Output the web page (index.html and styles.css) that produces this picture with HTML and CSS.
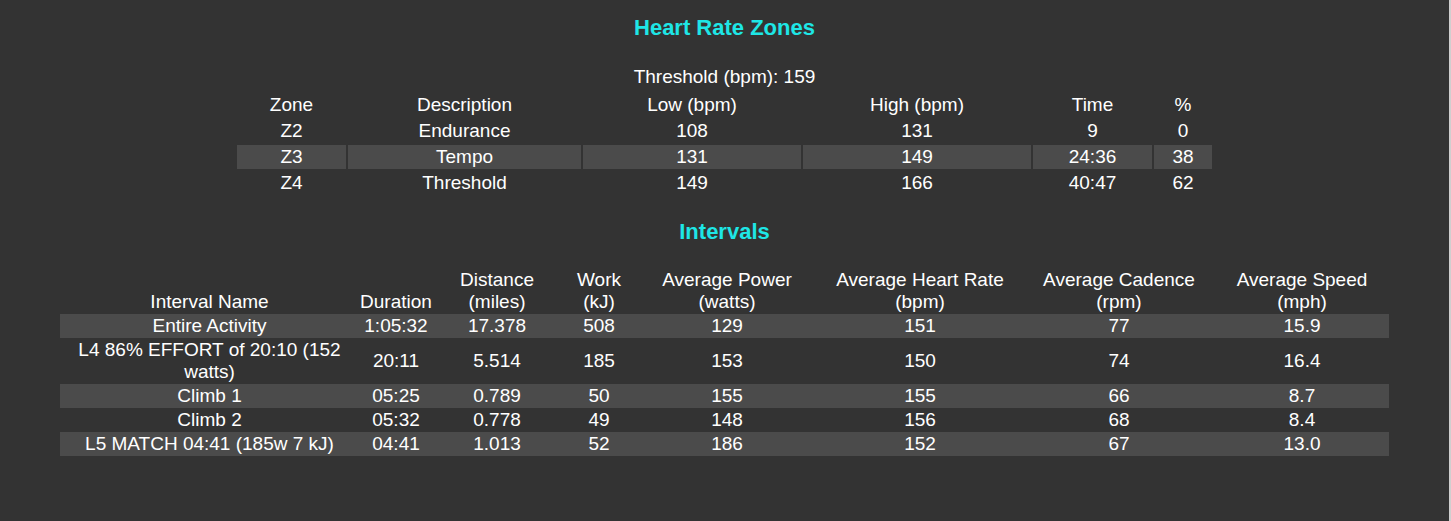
FILE: index.html
```html
<!DOCTYPE html>
<html lang="en">
<head>
<meta charset="utf-8">
<title>Activity Summary</title>
<link rel="stylesheet" href="styles.css">
</head>
<body>
<main class="page">
  <h3 class="title">Heart Rate Zones</h3>
  <div class="threshold">Threshold (bpm): 159</div>
  <table class="zones">
    <thead>
      <tr>
        <th class="z-zone">Zone</th>
        <th class="z-desc">Description</th>
        <th class="z-low">Low (bpm)</th>
        <th class="z-high">High (bpm)</th>
        <th class="z-time">Time</th>
        <th class="z-pct">%</th>
      </tr>
    </thead>
    <tbody>
      <tr><td>Z2</td><td>Endurance</td><td>108</td><td>131</td><td>9</td><td>0</td></tr>
      <tr class="alt"><td>Z3</td><td>Tempo</td><td>131</td><td>149</td><td>24:36</td><td>38</td></tr>
      <tr><td>Z4</td><td>Threshold</td><td>149</td><td>166</td><td>40:47</td><td>62</td></tr>
    </tbody>
  </table>

  <h3 class="title title-intervals">Intervals</h3>
  <table class="intervals">
    <thead>
      <tr>
        <th class="i-name">Interval Name</th>
        <th class="i-dur">Duration</th>
        <th class="i-dist">Distance<br>(miles)</th>
        <th class="i-work">Work<br>(kJ)</th>
        <th class="i-pow">Average Power<br>(watts)</th>
        <th class="i-hr">Average Heart Rate<br>(bpm)</th>
        <th class="i-cad">Average Cadence<br>(rpm)</th>
        <th class="i-spd">Average Speed<br>(mph)</th>
      </tr>
    </thead>
    <tbody>
      <tr class="alt"><td>Entire Activity</td><td>1:05:32</td><td>17.378</td><td>508</td><td>129</td><td>151</td><td>77</td><td>15.9</td></tr>
      <tr><td>L4 86% EFFORT of 20:10 (152 watts)</td><td>20:11</td><td>5.514</td><td>185</td><td>153</td><td>150</td><td>74</td><td>16.4</td></tr>
      <tr class="alt"><td>Climb 1</td><td>05:25</td><td>0.789</td><td>50</td><td>155</td><td>155</td><td>66</td><td>8.7</td></tr>
      <tr><td>Climb 2</td><td>05:32</td><td>0.778</td><td>49</td><td>148</td><td>156</td><td>68</td><td>8.4</td></tr>
      <tr class="alt"><td>L5 MATCH 04:41 (185w 7 kJ)</td><td>04:41</td><td>1.013</td><td>52</td><td>186</td><td>152</td><td>67</td><td>13.0</td></tr>
    </tbody>
  </table>
</main>
<div class="edge"></div>
</body>
</html>
```

FILE: styles.css
```css
html, body {
  margin: 0;
  padding: 0;
  height: 100%;
}

body {
  display: flex;
  background: #333333;
  color: #ffffff;
  font-family: "Liberation Sans", Arial, sans-serif;
  font-size: 19px;
  line-height: 22px;
  overflow: hidden;
}

.page {
  flex: 1;
  display: flex;
  flex-direction: column;
  align-items: center;
}

.edge {
  width: 2px;
  flex: none;
  background: #cfcfcf;
}

.title {
  margin: 15px 0 0;
  font-size: 22px;
  line-height: 25px;
  font-weight: bold;
  color: #1ee6e6;
  text-align: center;
}

.title-intervals {
  margin-top: 22px;
}

.threshold {
  margin-top: 26px;
  text-align: center;
}

table {
  table-layout: fixed;
  font-size: 19px;
  line-height: 22px;
}

th, td {
  box-sizing: border-box;
  padding: 1px;
  text-align: center;
  vertical-align: middle;
  font-weight: normal;
}

tr.alt td {
  background: #4b4b4b;
}

.zones {
  margin-top: 3px;
  border-spacing: 2px;
}

.z-zone { width: 109px; }
.z-desc { width: 233px; }
.z-low  { width: 218px; }
.z-high { width: 228px; }
.z-time { width: 119px; }
.z-pct  { width: 58px; }

.intervals {
  margin-top: 24px;
  border-spacing: 0;
  width: 1329px;
}

.intervals thead th {
  vertical-align: bottom;
}

.i-name { width: 299px; }
.i-dur  { width: 74px; }
.i-dist { width: 128px; }
.i-work { width: 76px; }
.i-pow  { width: 180px; }
.i-hr   { width: 206px; }
.i-cad  { width: 192px; }
.i-spd  { width: 174px; }
```
